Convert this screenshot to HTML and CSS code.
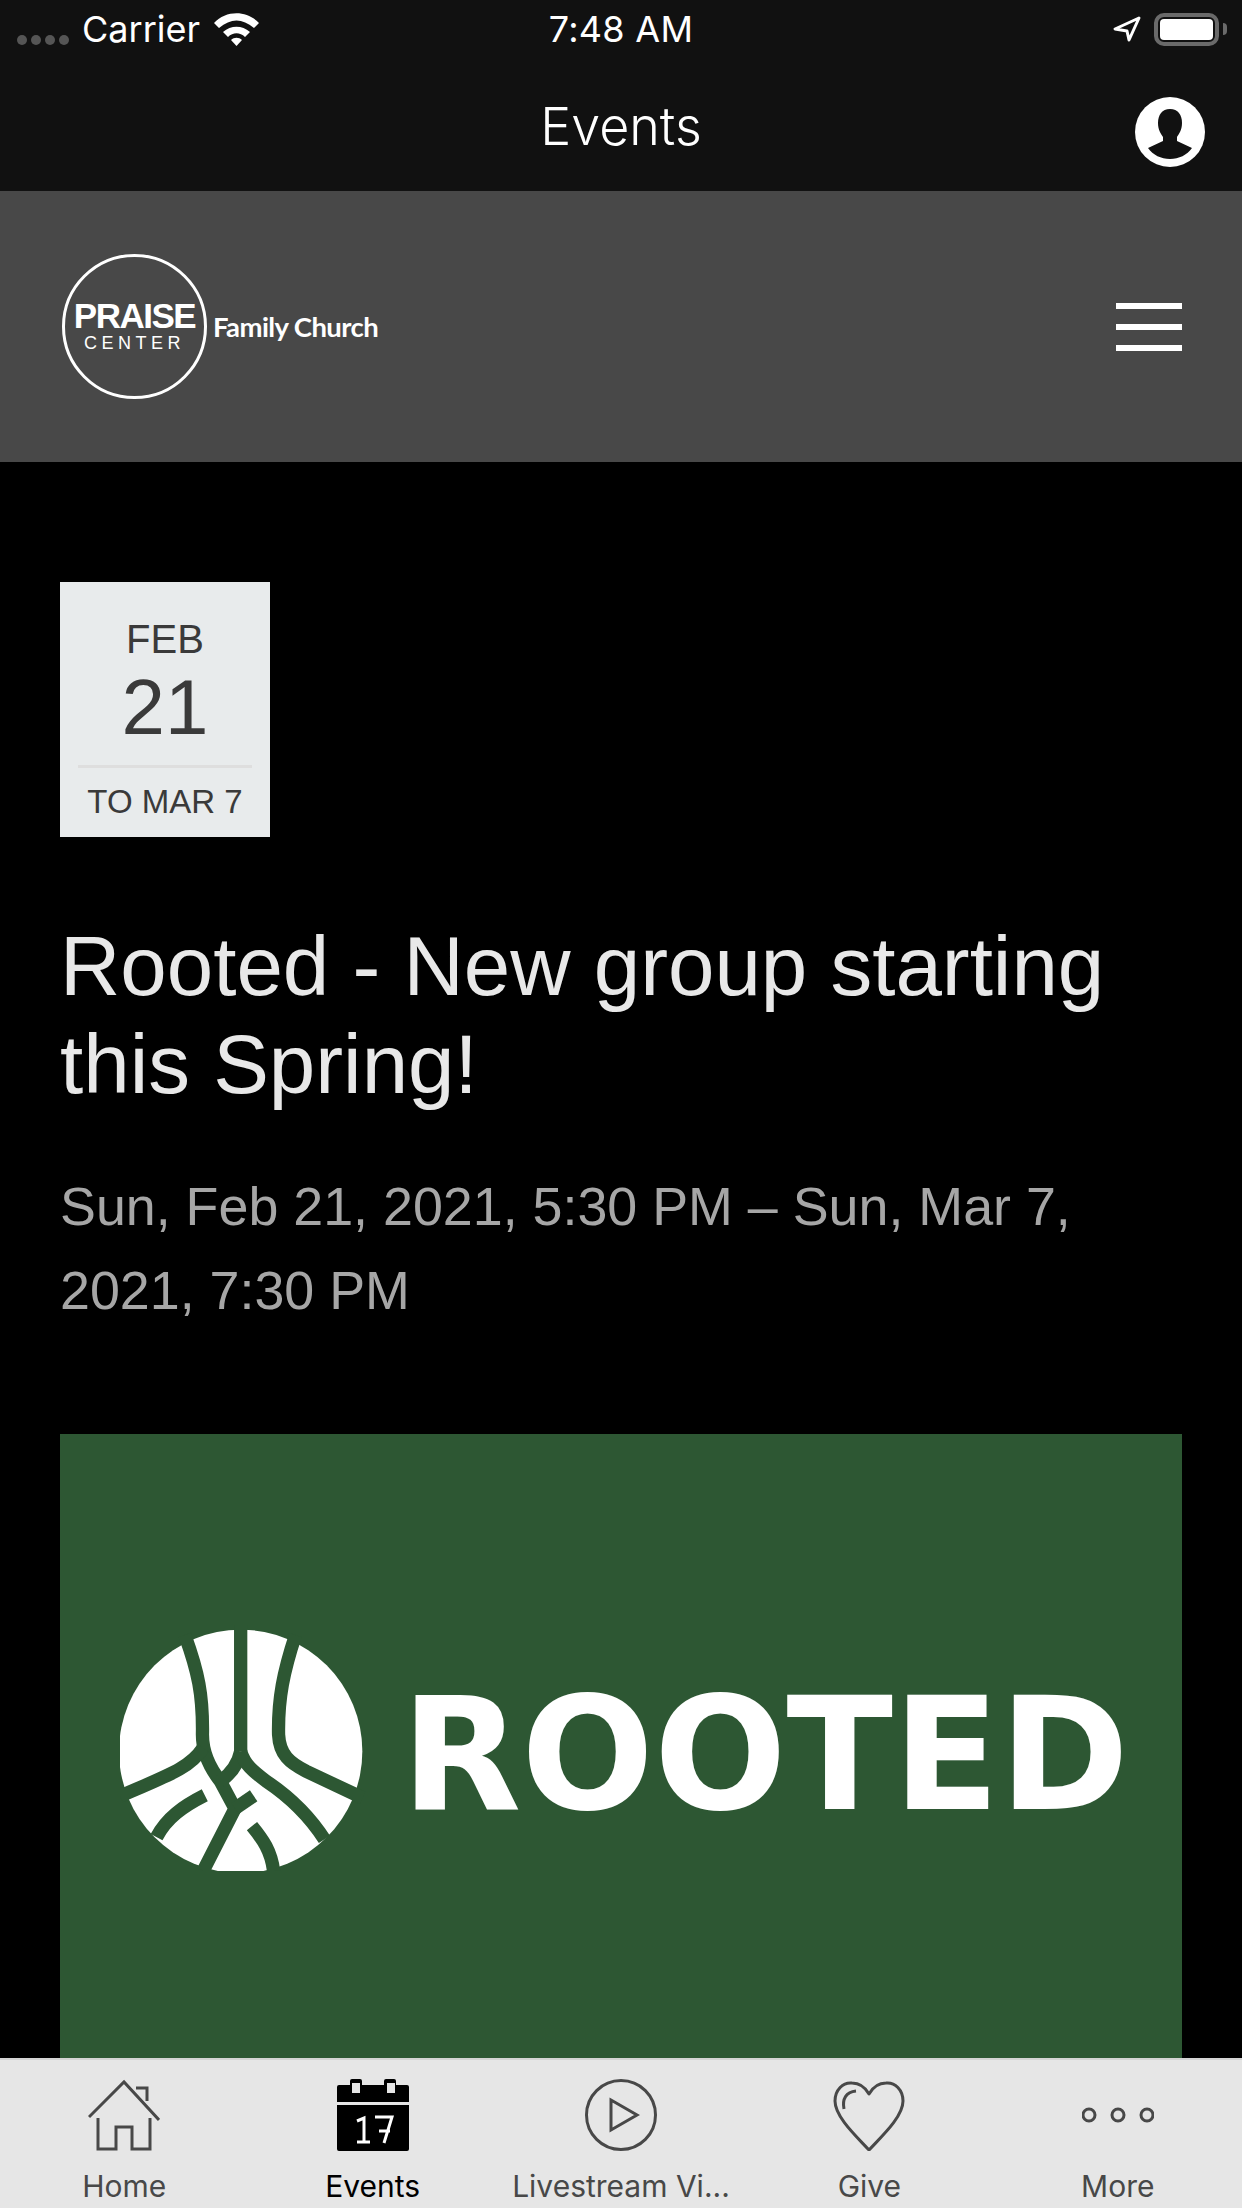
FILE: index.html
```html
<!DOCTYPE html>
<html lang="en">
<head>
  <meta charset="UTF-8" />
  <title>Events</title>
  <link rel="stylesheet" href="styles.css">
</head>
<body>
  <div class="topbar">
    <div class="status">
      <div class="status-left">
        <span class="signal"><i></i><i></i><i></i><i></i></span>
        <span class="carrier">Carrier</span>
        <svg class="wifi" viewBox="0 0 45 33"><path d="M0 10C12-3 33-3 45 10l-5 5C28 5 17 5 5 15z" fill="#fff"/><path d="M9 19c8-7 19-7 27 0l-5 5c-5-5-12-5-17 0z" fill="#fff"/><path d="M17 27c3-3 8-3 11 0l-5.500 6z" fill="#fff"/></svg>
      </div>
      <div class="status-time">7:48 AM</div>
      <div class="status-right">
        <svg class="arrow" viewBox="0 0 28 26"><path d="M26 2L2 13l12 2 2 9z" fill="none" stroke="#fff" stroke-width="3" stroke-linejoin="round"/></svg>
        <div class="battery"><div class="battery-fill"></div></div>
        <div class="battery-nub"></div>
      </div>
    </div>
    <div class="nav">
      <div></div>
      <div class="nav-title">Events</div>
      <div class="nav-right">
        <svg class="profile" viewBox="0 0 70 70"><circle cx="35" cy="35" r="35" fill="#fff"/><path d="M35 12C27 12 23 18 23 26C23 33 26 37 28 40V44L13 51C18 58 26 62 35 62C44 62 52 58 57 51L42 44V40C44 37 47 33 47 26C47 18 43 12 35 12z" fill="#111"/></svg>
      </div>
    </div>
  </div>

  <div class="site-header">
    <div class="logo">
      <div class="logo-ring">
        <div class="logo-praise">PRAISE</div>
        <div class="logo-center">CENTER</div>
      </div>
      <div class="logo-family">Family Church</div>
    </div>
    <div class="burger"><i></i><i></i><i></i></div>
  </div>

  <div class="content">
    <div class="datebox">
      <div class="date-month">FEB</div>
      <div class="date-day">21</div>
      <div class="date-to">TO MAR 7</div>
    </div>
    <h1 class="event-title">Rooted - New group starting this Spring!</h1>
    <p class="event-time">Sun, Feb 21, 2021, 5:30 PM – Sun, Mar 7, 2021, 7:30 PM</p>
    <div class="banner">
      <svg class="banner-mark" viewBox="90 70 740 740">
        <circle cx="453" cy="450" r="366" fill="#fff"/>
        <g fill="none" stroke="#2d5733" stroke-width="40">
          <path d="M453 60V450"/>
          <path d="M285 100C325 210 340 280 338 400C338 450 360 500 392 540L436 622L340 810"/>
          <path d="M618 100C582 210 565 290 567 400C570 460 600 485 650 510L820 590"/>
          <path d="M340 440C300 500 240 520 90 585"/>
          <path d="M453 450C445 490 420 520 392 540"/>
          <path d="M453 450C465 490 490 510 530 540C590 580 650 630 705 715"/>
          <path d="M436 622L492 584"/>
          <path d="M345 582C280 615 230 650 200 708"/>
          <path d="M487 675C520 715 545 750 552 810"/>
        </g>
      </svg>
      <span class="banner-word">ROOTED</span>
    </div>
  </div>

  <div class="tabbar">
    <div class="tab">
      <svg class="tab-icon" viewBox="0 0 72 72"><path d="M1 38L36 3l35 38M48 9h11v13M10 39v31h18V48h16v22h18V39" fill="none" stroke="#484848" stroke-width="3"/></svg>
      <span class="tab-label">Home</span>
    </div>
    <div class="tab tab-active">
      <svg class="tab-icon" viewBox="0 0 72 72"><path d="M0 8a2 2 0 0 1 2-2h11V2a2 2 0 0 1 2-2h8a2 2 0 0 1 2 2v4h22V2a2 2 0 0 1 2-2h8a2 2 0 0 1 2 2v4h11a2 2 0 0 1 2 2v15H0zM0 26h72v44a2 2 0 0 1-2 2H2a2 2 0 0 1-2-2z" fill="#000"/><path d="M15 4h8v10h-8zM50 4h8v10h-8z" fill="#e6e6e6"/><path d="M20 42l7-3v24M20 63h13M38 38h17l-8 26M42 52h11" fill="none" stroke="#fff" stroke-width="3"/></svg>
      <span class="tab-label">Events</span>
    </div>
    <div class="tab">
      <svg class="tab-icon" viewBox="0 0 72 72"><circle cx="36" cy="36" r="34.500" fill="none" stroke="#484848" stroke-width="3"/><path d="M26 21l26 15-26 15z" fill="none" stroke="#484848" stroke-width="3"/></svg>
      <span class="tab-label">Livestream Vi...</span>
    </div>
    <div class="tab">
      <svg class="tab-icon" viewBox="0 0 72 72"><path d="M36 71C24 58 2 38 2 22 2 11 10 3 19 4c8 0 13 4 17 11 4-7 9-11 17-11 9-1 17 7 17 18 0 16-22 36-34 49z" fill="none" stroke="#484848" stroke-width="3" stroke-linejoin="round"/><path d="M11 30c-2-10 2-17 12-18" fill="none" stroke="#484848" stroke-width="3"/></svg>
      <span class="tab-label">Give</span>
    </div>
    <div class="tab">
      <svg class="tab-icon" viewBox="0 0 72 72"><g fill="none" stroke="#484848" stroke-width="3"><circle cx="7" cy="36" r="6"/><circle cx="36" cy="36" r="6"/><circle cx="65" cy="36" r="6"/></g></svg>
      <span class="tab-label">More</span>
    </div>
  </div>
</body>
</html>
```

FILE: styles.css
```css
* {
  box-sizing: border-box;
}
body {
  margin: 0;
  width: 1242px;
  height: 2208px;
  overflow: hidden;
  display: flex;
  flex-direction: column;
  background: #000;
  font-family: "Liberation Sans", Arial, sans-serif;
}
.topbar {
  height: 191px;
  background: #111;
  color: #fff;
  font-family: Inter, sans-serif;
}
.status {
  height: 58px;
  padding: 12px 15px 0;
  display: grid;
  grid-template-columns: 1fr auto 1fr;
}
.status-left {
  display: flex;
  align-items: center;
  height: 34px;
}
.signal {
  display: flex;
  gap: 4px;
  margin: 22px 13px 0 2px;
}
.signal i {
  width: 10px;
  height: 10px;
  border-radius: 50%;
  background: #555;
}
.carrier {
  font-size: 36px;
  width: 132px;
}
.wifi {
  width: 45px;
  height: 33px;
}
.status-time {
  font-size: 36px;
  height: 34px;
  line-height: 34px;
  letter-spacing: 0.3px;
}
.status-right {
  display: flex;
  justify-content: flex-end;
  align-items: center;
  height: 34px;
}
.arrow {
  width: 28px;
  height: 26px;
  margin-right: 13px;
}
.battery {
  width: 65px;
  height: 33px;
  border: 4px solid #6a6a6a;
  border-radius: 10px;
  padding: 2px;
}
.battery-fill {
  height: 100%;
  background: #fff;
  border-radius: 4px;
}
.battery-nub {
  width: 4px;
  height: 12px;
  margin-left: 4px;
  background: #6a6a6a;
  border-radius: 0 6px 6px 0;
}
.nav {
  height: 133px;
  display: grid;
  grid-template-columns: 1fr auto 1fr;
  align-items: center;
}
.nav-title {
  font-size: 52px;
  font-weight: 300;
  margin-top: 4px;
}
.nav-right {
  display: flex;
  justify-content: flex-end;
  padding-right: 37px;
  margin-top: 15px;
}
.profile {
  width: 70px;
  height: 70px;
}

.site-header {
  height: 271px;
  background: #484848;
  padding: 0 60px 0 62px;
  display: flex;
  justify-content: space-between;
  align-items: center;
  color: #fff;
}
.logo {
  display: flex;
  align-items: center;
}
.logo-ring {
  width: 145px;
  height: 145px;
  border: 3px solid #fff;
  border-radius: 50%;
  display: flex;
  flex-direction: column;
  align-items: center;
  padding-top: 42px;
}
.logo-praise {
  font-size: 35px;
  font-weight: bold;
  letter-spacing: -1.5px;
  line-height: 34px;
}
.logo-center {
  font-size: 18px;
  letter-spacing: 4.500px;
  line-height: 20px;
}
.logo-family {
  margin-left: 6px;
  font-family: Lato, sans-serif;
  font-size: 27.500px;
  font-weight: bold;
  letter-spacing: -0.6px;
}
.burger {
  width: 66px;
  display: flex;
  flex-direction: column;
  gap: 15px;
}
.burger i {
  height: 6px;
  background: #fff;
}

.content {
  flex: 1;
  overflow: hidden;
  padding: 120px 60px 0;
}
.datebox {
  width: 210px;
  height: 255px;
  background: #e8ebec;
  color: #3a3a3a;
  text-align: center;
  padding-top: 34px;
}
.date-month {
  font-size: 40px;
  line-height: 46px;
}
.date-day {
  margin-top: 5px;
  font-size: 78px;
  line-height: 80px;
}
.date-to {
  margin: 18px 18px 0;
  border-top: 3px solid #dedede;
  padding-top: 15px;
  font-size: 33px;
  line-height: 38px;
  white-space: nowrap;
}
.event-title {
  margin: 80px 0 0;
  font-size: 83.500px;
  font-weight: normal;
  line-height: 98px;
  color: #e8e8e8;
}
.event-time {
  margin: 51px 0 0;
  font-size: 53.800px;
  line-height: 84px;
  color: #a6a6a6;
}
.banner {
  margin-top: 102px;
  height: 635px;
  background: #2d5733;
  padding: 0 53px 0 60px;
  display: flex;
  align-items: center;
  justify-content: space-between;
}
.banner-mark {
  width: 246px;
  height: 246px;
  margin-bottom: 8px;
}
.banner-word {
  margin-top: 6px;
  font-family: "DejaVu Sans", sans-serif;
  font-size: 156px;
  font-weight: 700;
  color: #fff;
  line-height: 1;
}

.tabbar {
  height: 150px;
  flex-shrink: 0;
  background: #e6e6e6;
  border-top: 2px solid #d4d4d4;
  display: grid;
  grid-template-columns: repeat(5, 1fr);
}
.tab {
  display: flex;
  flex-direction: column;
  align-items: center;
  padding-top: 19px;
  color: #484848;
}
.tab-icon {
  width: 72px;
  height: 72px;
}
.tab-label {
  margin-top: 17px;
  font-family: Inter, sans-serif;
  font-size: 30px;
  line-height: 36px;
  white-space: nowrap;
}
.tab-active {
  color: #000;
}
```
